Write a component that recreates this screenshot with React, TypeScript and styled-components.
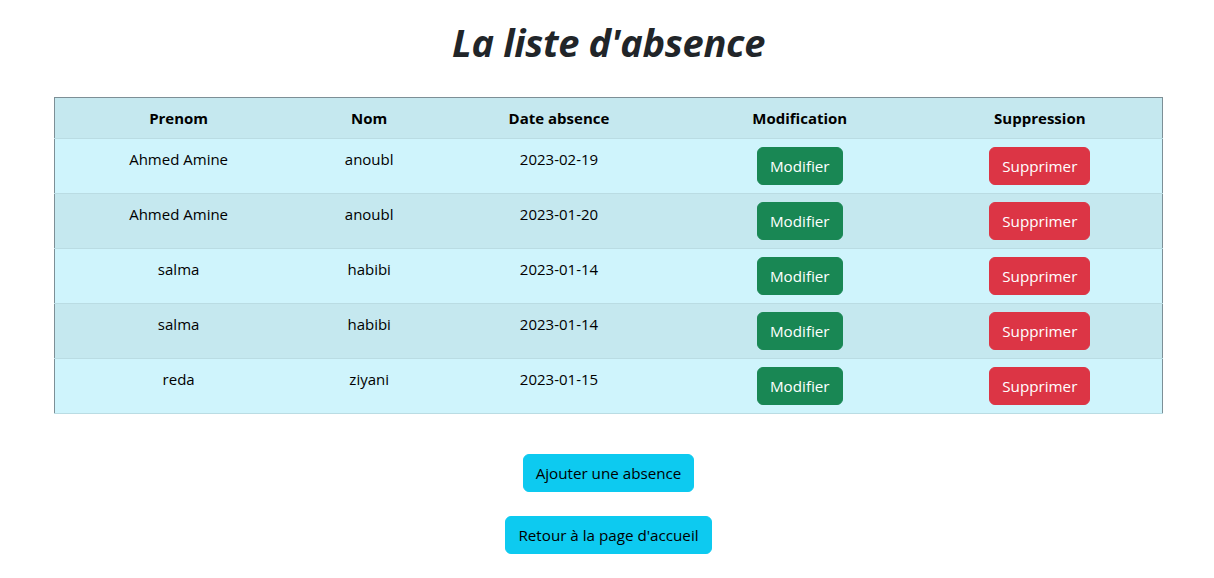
import React from "react";
import styled, { createGlobalStyle } from "styled-components";

const GlobalStyle = createGlobalStyle`
  html, body { margin: 0; padding: 0; background: #fff; }
  body {
    font-family: "Open Sans", "Noto Sans", "Liberation Sans", sans-serif;
    font-size: 16px;
    line-height: 24px;
    color: #212529;
  }
  * { box-sizing: border-box; }
`;

const Page = styled.div`
  padding: 18px 51px 0 54px;
  display: flex;
  flex-direction: column;
  align-items: center;
`;

const Title = styled.h1`
  margin: 0 0 31px 0;
  font-size: 38px;
  line-height: 48px;
  font-weight: 700;
  font-style: italic;
  color: #212529;
  text-align: center;
  letter-spacing: -0.3px;
`;

const Table = styled.table`
  width: 1109px;
  border-collapse: collapse;
  border-top: 1px solid #7d8f96;
  border-left: 1px solid #7d8f96;
  border-right: 1px solid #7d8f96;
  margin-bottom: 40px;
`;

const HeadCell = styled.th<{ $w: number }>`
  width: ${(p) => p.$w}px;
  padding: 8px;
  font-weight: 700;
  font-size: 15px;
  text-align: center;
  color: #000;
  background: #c5e8ef;
  border-bottom: 1px solid #badce3;
`;

const Row = styled.tr<{ $alt: boolean }>`
  background: ${(p) => (p.$alt ? "#c5e8ef" : "#cff4fc")};
`;

const Cell = styled.td`
  padding: 8px;
  text-align: center;
  vertical-align: top;
  font-size: 15px;
  color: #000;
  border-bottom: 1px solid #badce3;
`;

const Btn = styled.button<{ $variant: "success" | "danger" | "info" }>`
  display: inline-block;
  font-family: inherit;
  font-size: 15.2px;
  line-height: 24px;
  padding: 6px 12px;
  border: 1px solid transparent;
  border-radius: 6px;
  cursor: pointer;
  background: ${(p) =>
    p.$variant === "success" ? "#198754" : p.$variant === "danger" ? "#dc3545" : "#0dcaf0"};
  border-color: ${(p) =>
    p.$variant === "success" ? "#198754" : p.$variant === "danger" ? "#dc3545" : "#0dcaf0"};
  color: ${(p) => (p.$variant === "info" ? "#000" : "#fff")};
`;

const Actions = styled.div`
  display: flex;
  flex-direction: column;
  align-items: center;
  gap: 24px;
`;

const rows = [
  { prenom: "Ahmed Amine", nom: "anoubl", date: "2023-02-19" },
  { prenom: "Ahmed Amine", nom: "anoubl", date: "2023-01-20" },
  { prenom: "salma", nom: "habibi", date: "2023-01-14" },
  { prenom: "salma", nom: "habibi", date: "2023-01-14" },
  { prenom: "reda", nom: "ziyani", date: "2023-01-15" },
];

export default function App() {
  return (
    <>
      <GlobalStyle />
      <Page>
        <Title>La liste d'absence</Title>
        <Table>
          <thead>
            <tr>
              <HeadCell $w={248}>Prenom</HeadCell>
              <HeadCell $w={134}>Nom</HeadCell>
              <HeadCell $w={246}>Date absence</HeadCell>
              <HeadCell $w={236}>Modification</HeadCell>
              <HeadCell $w={245}>Suppression</HeadCell>
            </tr>
          </thead>
          <tbody>
            {rows.map((r, i) => (
              <Row key={i} $alt={i % 2 === 1}>
                <Cell>{r.prenom}</Cell>
                <Cell>{r.nom}</Cell>
                <Cell>{r.date}</Cell>
                <Cell>
                  <Btn $variant="success">Modifier</Btn>
                </Cell>
                <Cell>
                  <Btn $variant="danger">Supprimer</Btn>
                </Cell>
              </Row>
            ))}
          </tbody>
        </Table>
        <Actions>
          <Btn $variant="info">Ajouter une absence</Btn>
          <Btn $variant="info">Retour à la page d'accueil</Btn>
        </Actions>
      </Page>
    </>
  );
}
